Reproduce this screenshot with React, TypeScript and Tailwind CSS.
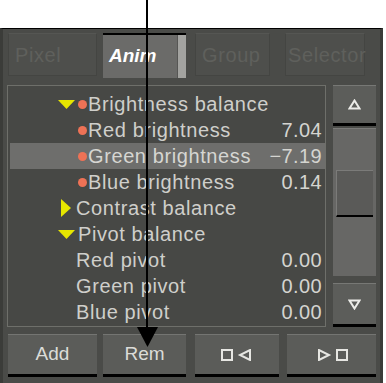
import React from "react";

type Row = {
    label: string;
    value?: string;
    indent: number;
    arrow?: "down" | "right";
    dot?: boolean;
    selected?: boolean;
};

const rows: Row[] = [
    { label: "Brightness balance", indent: 48, arrow: "down", dot: true },
    { label: "Red brightness", value: "7.04", indent: 68, dot: true },
    { label: "Green brightness", value: "\u22127.19", indent: 68, dot: true, selected: true },
    { label: "Blue brightness", value: "0.14", indent: 68, dot: true },
    { label: "Contrast balance", indent: 51, arrow: "right" },
    { label: "Pivot balance", indent: 48, arrow: "down" },
    { label: "Red pivot", value: "0.00", indent: 66 },
    { label: "Green pivot", value: "0.00", indent: 66 },
    { label: "Blue pivot", value: "0.00", indent: 66 },
];

const Tab = ({ label, width, active, pad }: { label: string; width: string; active?: boolean; pad: string }) =>
    active ? (
        <div className={`${width} h-[45px] flex bg-[#6b6b69] border-t-2 border-black`}>
            <div className="flex-1 flex items-center pl-[6px] text-white italic font-bold text-[19px]">
                {label}
            </div>
            <div className="w-[9px] bg-[#a3a3a0] border-l border-[#565654]" />
        </div>
    ) : (
        <div className={`${width} h-[43px] flex items-center ${pad} whitespace-nowrap bg-[#4e4f4c] border border-[#444542] border-t-[#555653] text-[#5f605c] text-[20px] tracking-[0.6px]`}>
            {label}
        </div>
    );

const Button = ({ children, width }: { children: React.ReactNode; width: string }) => (
    <div className={`${width} h-[43px] flex items-center justify-center bg-[#5b5c59] border-t border-[#747572] border-b-[3px] border-b-black text-[#dcdcd8] text-[19px]`}>
        {children}
    </div>
);

const RowLine = ({ row }: { row: Row }) => (
    <div className={`h-[26px] flex items-center pr-[3px] ${row.selected ? "bg-[#6e6e6c]" : ""}`}>
        <div className="flex items-center" style={{ paddingLeft: row.indent }}>
            {row.arrow === "down" && (
                <svg width="17" height="9" viewBox="0 0 17 9" className="mr-[3px]">
                    <polygon points="0,0 17,0 8.5,9" fill="#e6e600" />
                </svg>
            )}
            {row.arrow === "right" && (
                <svg width="10" height="18" viewBox="0 0 10 18" className="mr-[5px]">
                    <polygon points="0,0 10,9 0,18" fill="#e6e600" />
                </svg>
            )}
            {row.dot && <span className="w-[9px] h-[9px] rounded-full bg-[#ee7256] mr-[1px]" />}
            <span className={`text-[20px] tracking-[0.6px] ${row.selected ? "text-[#d6d6d2]" : "text-[#cfcfcb]"}`}>
                {row.label}
            </span>
        </div>
        <span className="ml-auto text-[20px] tracking-[0.4px] text-[#d4d4d0]">{row.value}</span>
    </div>
);

export default function App() {
    return (
        <div
            className="relative w-[386px] h-[383px] bg-white overflow-hidden flex flex-col"
            style={{ fontFamily: '"Liberation Sans", Arial, sans-serif' }}
        >
            <div className="h-[28px] shrink-0" />
            <div className="w-[383px] flex-1 bg-[#4a4b48] border-t border-black border-l-[3px] border-l-[#3b3c39] border-r-[3px] border-r-[#3b3c39] flex flex-col">
                <div className="flex items-start pl-[5px] pt-[4px]">
                    <Tab label="Pixel" width="w-[89px]" pad="pl-[6px]" />
                    <div className="w-[6px]" />
                    <Tab label="Anim" width="w-[83px]" active />
                    <div className="w-[9px]" />
                    <Tab label="Group" width="w-[75px]" pad="pl-[6px]" />
                    <div className="w-[15px]" />
                    <Tab label="Selector" width="w-[80px]" pad="pl-[2px]" />
                </div>

                <div className="flex pl-[4px] pt-[7px]">
                    <div className="w-[319px] h-[242px] bg-[#474845] border border-[#6e6f6a] pt-[5px] pl-[2px]">
                        {rows.map((r) => (
                            <RowLine key={r.label} row={r} />
                        ))}
                    </div>
                    <div className="ml-[7px] w-[43px] h-[242px] flex flex-col">
                        <div className="h-[41px] flex items-center justify-center bg-[#5c5d5a] border-t border-[#777875] border-b-[3px] border-b-black">
                            <svg width="13" height="11" viewBox="0 0 13 11">
                                <polygon points="6.5,1.5 11.5,9.5 1.5,9.5" fill="none" stroke="#ecece8" strokeWidth="2" />
                            </svg>
                        </div>
                        <div className="mt-[2px] h-[148px] bg-[#676765] border-t border-[#7a7a78] flex flex-col pt-[41px] px-[3px]">
                            <div className="h-[47px] bg-[#5a5a58] border-t border-l border-[#7b7b79] border-b-2 border-b-black" />
                        </div>
                        <div className="mt-[7px] h-[44px] flex items-center justify-center bg-[#5c5d5a] border-t border-[#777875] border-b-[3px] border-b-black">
                            <svg width="13" height="11" viewBox="0 0 13 11">
                                <polygon points="1.5,1.5 11.5,1.5 6.5,9.5" fill="none" stroke="#ecece8" strokeWidth="2" />
                            </svg>
                        </div>
                    </div>
                </div>

                <div className="flex pl-[5px] pt-[7px]">
                    <Button width="w-[89px]">Add</Button>
                    <div className="w-[6px]" />
                    <Button width="w-[83px]">Rem</Button>
                    <div className="w-[9px]" />
                    <Button width="w-[84px]">
                        <svg width="32" height="12" viewBox="0 0 32 12">
                            <rect x="1" y="1" width="10" height="10" fill="none" stroke="#e6e6e2" strokeWidth="2" />
                            <polygon points="29,1 29,11 19,6" fill="none" stroke="#e6e6e2" strokeWidth="2" />
                        </svg>
                    </Button>
                    <div className="w-[8px]" />
                    <Button width="w-[89px]">
                        <svg width="32" height="12" viewBox="0 0 32 12">
                            <polygon points="3,1 3,11 13,6" fill="none" stroke="#e6e6e2" strokeWidth="2" />
                            <rect x="21" y="1" width="10" height="10" fill="none" stroke="#e6e6e2" strokeWidth="2" />
                        </svg>
                    </Button>
                </div>
            </div>

            <svg className="absolute left-0 top-0 pointer-events-none" width="386" height="383" viewBox="0 0 386 383">
                <line x1="147" y1="0" x2="147" y2="332" stroke="#000" strokeWidth="2" />
                <polygon points="137,327 158,327 147.5,347" fill="#000" />
            </svg>
        </div>
    );
}
